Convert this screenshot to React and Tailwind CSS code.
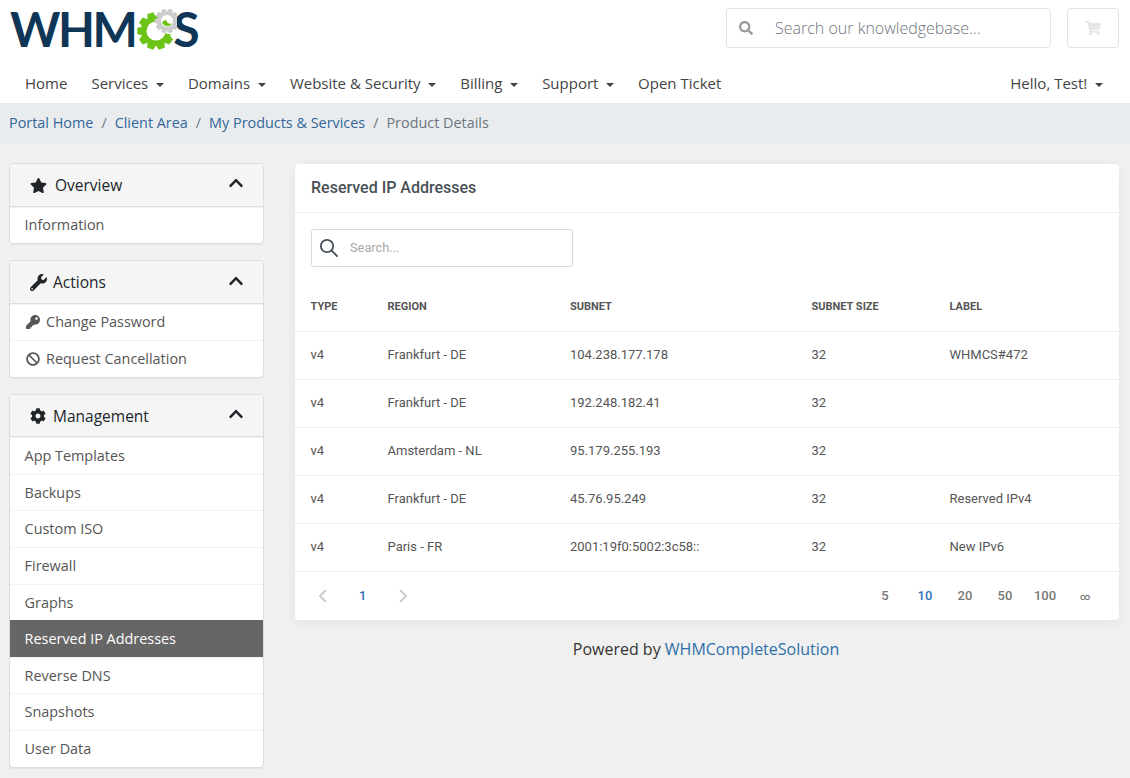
import { FaStar, FaWrench, FaKey, FaBan, FaCog, FaChevronUp, FaSearch, FaShoppingCart } from "react-icons/fa";

const navItems = [
  { label: "Home" },
  { label: "Services", caret: true },
  { label: "Domains", caret: true },
  { label: "Website & Security", caret: true },
  { label: "Billing", caret: true },
  { label: "Support", caret: true },
  { label: "Open Ticket" },
];

const rows = [
  ["v4", "Frankfurt - DE", "104.238.177.178", "32", "WHMCS#472"],
  ["v4", "Frankfurt - DE", "192.248.182.41", "32", ""],
  ["v4", "Amsterdam - NL", "95.179.255.193", "32", ""],
  ["v4", "Frankfurt - DE", "45.76.95.249", "32", "Reserved IPv4"],
  ["v4", "Paris - FR", "2001:19f0:5002:3c58::", "32", "New IPv6"],
];

const management = ["App Templates", "Backups", "Custom ISO", "Firewall", "Graphs", "Reserved IP Addresses", "Reverse DNS", "Snapshots", "User Data"];

const gearPoints = (cx, cy, outer, inner, teeth) => {
  const pts = [];
  const step = (Math.PI * 2) / teeth;
  for (let i = 0; i < teeth; i++) {
    const a = i * step;
    [[-0.5, inner], [-0.26, outer], [0.26, outer], [0.5, inner]].forEach(([k, r]) => {
      const t = a + k * step;
      pts.push(`${(cx + Math.cos(t) * r).toFixed(2)},${(cy + Math.sin(t) * r).toFixed(2)}`);
    });
  }
  return pts.join(" ");
};

const Logo = () => (
  <div className="flex items-center h-[48px] -mt-[3px] text-[#0f3557] font-['Lato',sans-serif] font-bold text-[48px] leading-[48px]">
    <span className="tracking-[-2.5px]">WHM</span>
    <svg width="42" height="44" viewBox="0 0 42 44" className="-mr-[4px] shrink-0 relative z-10">
      <polygon points={gearPoints(21, 24, 19, 14.5, 10)} fill="#6cc417" />
      <circle cx="21" cy="24" r="9.5" fill="#fff" />
      <polygon points="21,24 42,14 42,29" fill="#fff" />
      <polygon points={gearPoints(32, 14, 12.5, 9.5, 10)} fill="#cdcdcd" />
      <circle cx="32" cy="14" r="6" fill="#fff" />
      <path d="M27 15a5.5 5.5 0 0 0 10 1.5a5 5 0 0 1-4.5-1a4 4 0 0 1-1.5-3z" fill="#6cc417" />
    </svg>
    <span>S</span>
  </div>
);

const Caret = () => <span className="inline-block ml-[7.7px] align-middle border-x-[4.5px] border-x-transparent border-t-[4.5px] border-t-[#444]" />;

const Header = () => (
  <header className="bg-white h-[103px]">
    <div className="flex justify-between h-[63px] pl-[10px] pr-[11px] pt-[8px]">
      <Logo />
      <div className="flex gap-[16px]">
        <div className="flex items-center w-[325px] h-[40px] border border-[#e2e2e2] rounded-[4px]">
          <FaSearch className="ml-[12px] text-[14px] text-[#999]" />
          <span className="ml-[22px] text-[16px] font-light text-[#6c757d]">Search our knowledgebase...</span>
        </div>
        <div className="flex items-center justify-center w-[52px] h-[40px] border border-[#e2e2e2] rounded-[4px]">
          <FaShoppingCart className="text-[16px] text-[#e6e6e6]" />
        </div>
      </div>
    </div>
    <nav className="flex justify-between items-center h-[40px] pl-[25px] pr-[27px] text-[15px] text-[#444]">
      <div className="flex gap-[24px]">
        {navItems.map((item) => (
          <span key={item.label}>
            {item.label}
            {item.caret && <Caret />}
          </span>
        ))}
      </div>
      <span>
        Hello, Test!
        <Caret />
      </span>
    </nav>
  </header>
);

const Breadcrumb = () => (
  <div className="flex items-center h-[40px] bg-[#e9ecef] pl-[9px] pb-[1px] text-[14.4px] text-[#6c757d]">
    <span className="text-[#336699]">Portal Home</span>
    <span className="px-[8px]">/</span>
    <span className="text-[#336699]">Client Area</span>
    <span className="px-[8px]">/</span>
    <span className="text-[#336699]">My Products & Services</span>
    <span className="px-[8px]">/</span>
    <span>Product Details</span>
  </div>
);

const Panel = ({ icon, title, children, gap = "gap-[8px]" }) => (
  <div className="bg-white border border-[#ddd] rounded-[4px] shadow-[0_1px_1px_rgba(0,0,0,0.05)] overflow-hidden">
    <div className={`flex items-center h-[42.5px] pt-[1.4px] pl-[20px] pr-[19px] bg-[#f5f5f5] border-b border-[#ddd] text-[15.5px] text-[#212529] ${gap}`}>
      {icon}
      <span>{title}</span>
      <FaChevronUp className="ml-auto mb-[4px] text-[16px] text-[#212529]" />
    </div>
    {children}
  </div>
);

const SideItem = ({ children, active }) => (
  <div className={`flex items-center h-[36.6px] pl-[14.6px] pr-[15px] text-[14.4px] border-t first:border-t-0 ${active ? "bg-[#666] text-white border-[#666]" : "text-[#555] border-[#f3f3f3]"}`}>
    {children}
  </div>
);

const Sidebar = () => (
  <aside className="w-[255px] shrink-0 flex flex-col gap-[16px]">
    <Panel icon={<FaStar className="text-[17px]" />} title="Overview">
      <SideItem>Information</SideItem>
    </Panel>
    <Panel icon={<FaWrench className="text-[17px]" />} title="Actions" gap="gap-[6px]">
      <SideItem>
        <FaKey className="text-[14px] ml-[1px] mr-[6.5px]" />
        <span className="-mt-[1px]">Change Password</span>
      </SideItem>
      <SideItem>
        <FaBan className="text-[14px] ml-[1px] mr-[6.5px]" />
        Request Cancellation
      </SideItem>
    </Panel>
    <Panel icon={<FaCog className="text-[16px]" />} title="Management" gap="gap-[7px]">
      {management.map((name) => (
        <SideItem key={name} active={name === "Reserved IP Addresses"}>{name}</SideItem>
      ))}
    </Panel>
  </aside>
);

const gridCols = "grid grid-cols-[77px_182.5px_241.5px_138px_1fr]";

const PagerChevron = ({ d }) => (
  <svg width="10" height="14" viewBox="0 0 10 14" fill="none" stroke="#ccc" strokeWidth="2">
    <path d={d} />
  </svg>
);

const IpTable = () => (
  <div className="bg-white rounded-[4px] shadow-[0_2px_12px_rgba(0,0,0,0.06)] font-['Roboto',sans-serif] text-[#555]">
    <div className="flex items-center h-[49px] px-[16px] border-b border-[#edeef2] text-[16px] font-medium text-[#495057]">Reserved IP Addresses</div>
    <div className="px-[16px] pt-[16px] pb-[17px]">
      <div className="flex items-center w-[262px] h-[38px] border border-[#d8d8e4] rounded-[3px] pl-[7px]">
        <svg width="20" height="20" viewBox="0 0 20 20" fill="none" stroke="#47505a" strokeWidth="1.8" strokeLinecap="round">
          <circle cx="8" cy="8" r="6.2" />
          <path d="M12.6 12.6 18 18" />
        </svg>
        <span className="ml-[11px] text-[12.8px] text-[#aaa]">Search...</span>
      </div>
    </div>
    <div className={`${gridCols} h-[48px] items-center pl-[15.5px] pr-[16px] text-[11px] font-bold text-[#555] uppercase border-b border-[#edeef2]`}>
      <span>Type</span>
      <span>Region</span>
      <span>Subnet</span>
      <span>Subnet Size</span>
      <span>Label</span>
    </div>
    {rows.map((row) => (
      <div key={row[2]} className={`${gridCols} h-[48px] items-center pl-[15.5px] pr-[16px] pb-[2px] text-[13px] border-b border-[#edeef2]`}>
        {row.map((cell, i) => (
          <span key={i}>{cell}</span>
        ))}
      </div>
    ))}
    <div className="flex items-center justify-between h-[48px] px-[16px] text-[13px] text-[#777]">
      <div className="flex items-center">
        <span className="ml-[7px]"><PagerChevron d="M8 1 2 7l6 6" /></span>
        <span className="ml-[31px] font-medium text-[#2f6fb5]">1</span>
        <span className="ml-[32px]"><PagerChevron d="M2 1l6 6-6 6" /></span>
      </div>
      <div className="flex items-center text-center font-medium -mr-[2px]">
        <span className="w-[40px]">5</span>
        <span className="w-[40px] text-[#2f6fb5]">10</span>
        <span className="w-[40px]">20</span>
        <span className="w-[40px]">50</span>
        <span className="w-[40px]">100</span>
        <span className="w-[40px] text-[10px]">∞</span>
      </div>
    </div>
  </div>
);

export default function App() {
  return (
    <div className="min-h-[778px] bg-[#f0f0f0] font-['Open_Sans',sans-serif]">
      <Header />
      <Breadcrumb />
      <div className="flex gap-[31px] pl-[9px] pr-[11px] pt-[20px] pb-[9px]">
        <Sidebar />
        <main className="flex-1 min-w-0 pt-[1px]">
          <IpTable />
          <p className="mt-[17px] pr-[2px] text-center text-[16px] text-[#333]">
            Powered by <span className="text-[#2f6fa8]">WHMCompleteSolution</span>
          </p>
        </main>
      </div>
    </div>
  );
}
